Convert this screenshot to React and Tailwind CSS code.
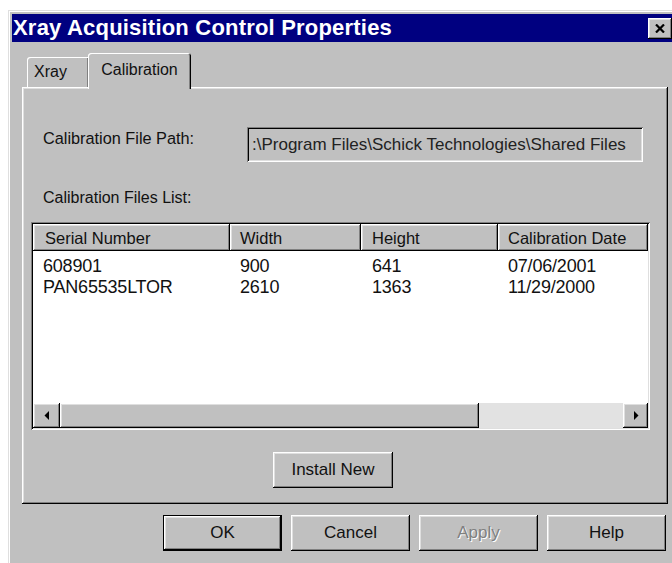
// Xray Acquisition Control Properties dialog, Calibration tab
const raised =
  "bg-[#c0c0c0] shadow-[inset_-1px_-1px_0_#000,inset_1px_1px_0_#fff,inset_-2px_-2px_0_#808080,inset_2px_2px_0_#dfdfdf]";
const sunken =
  "shadow-[inset_1px_1px_0_#808080,inset_-1px_-1px_0_#fff,inset_2px_2px_0_#000,inset_-2px_-2px_0_#dfdfdf]";

function Button({ children, className = "", disabled = false, isDefault = false }) {
  return (
    <div
      className={
        "flex items-center justify-center h-[36px] text-[17px] " +
        (isDefault ? "border border-black " : "") +
        className
      }
    >
      <div className={"w-full h-full flex items-center justify-center " + raised}>
        <span
          className={
            disabled ? "text-[#808080] [text-shadow:1px_1px_0_#fff]" : "text-[#111]"
          }
        >
          {children}
        </span>
      </div>
    </div>
  );
}

function ArrowLeft() {
  return (
    <svg width="6" height="9" viewBox="0 0 6 9">
      <path d="M5 0 L5 9 L0.5 4.5 Z" fill="#000" />
    </svg>
  );
}

function ArrowRight() {
  return (
    <svg width="6" height="9" viewBox="0 0 6 9">
      <path d="M1 0 L1 9 L5.5 4.5 Z" fill="#000" />
    </svg>
  );
}

const rows = [
  ["608901", "900", "641", "07/06/2001"],
  ["PAN65535LTOR", "2610", "1363", "11/29/2000"],
];

export default function App() {
  return (
    <div className="w-[672px] h-[563px] overflow-hidden bg-white font-['Liberation_Sans',Arial,sans-serif] text-[16px] leading-[18px] text-[#111]">
      {/* window frame */}
      <div className="ml-[8px] mt-[10px] w-[670px] h-[560px] bg-[#c0c0c0] shadow-[inset_1px_1px_0_#dfdfdf,inset_2px_2px_0_#fff] pt-[4px] pl-[4px] pr-[4px]">
        {/* caption */}
        <div className="h-[28px] bg-[#000080] flex items-center">
          <span className="pl-[1px] text-white font-bold text-[22px] leading-[28px] tracking-[0.2px]">
            Xray Acquisition Control Properties
          </span>
          <div className={"ml-auto mr-[2px] w-[24px] h-[21px] flex items-center justify-center " + raised}>
            <svg width="10" height="9" viewBox="0 0 10 9">
              <path d="M1 0.5 L9 8.5 M9 0.5 L1 8.5" stroke="#000" strokeWidth="2.2" />
            </svg>
          </div>
        </div>

        <div className="ml-[10px] w-[646px]">
          {/* tabs */}
          <div className="mt-[11px] h-[34px] pl-[5px] flex items-end">
            <div className="h-[30px] w-[61px] rounded-tl-[3px] shadow-[inset_1px_1px_0_#fff,inset_-1px_0_0_#808080] flex items-center pl-[7px]">
              <span>Xray</span>
            </div>
            <div className="relative z-10 -mb-[2px] h-[36px] w-[103px] bg-[#c0c0c0] rounded-t-[3px] shadow-[inset_1px_1px_0_#fff,inset_-1px_0_0_#000,inset_-2px_0_0_#808080] flex items-start justify-center pt-[8px]">
              <span>Calibration</span>
            </div>
          </div>

          {/* tab page */}
          <div className={"h-[417px] pt-[40px] pl-[9px] " + raised}>
            <div className="flex items-start">
              <div className="ml-[12px] w-[204px] mt-[2px] text-[16.3px]">Calibration File Path:</div>
              <div className={"w-[396px] h-[35px] flex items-center pl-[5px] pr-[4px] overflow-hidden whitespace-nowrap " + sunken}>
                <span className="text-[#222] text-[17px]">:\Program Files\Schick Technologies\Shared Files</span>
              </div>
            </div>

            <div className="ml-[12px] mt-[27px]">Calibration Files List:</div>

            {/* list view */}
            <div className={"mt-[15px] w-[619px] h-[208px] p-[2px] flex flex-col bg-white " + sunken}>
              <div className="h-[27px] flex shrink-0 text-[16.5px]">
                <div className={"w-[197px] pl-[12px] flex items-center " + raised}>Serial Number</div>
                <div className={"w-[131px] pl-[10px] flex items-center " + raised}>Width</div>
                <div className={"w-[137px] pl-[11px] flex items-center " + raised}>Height</div>
                <div className={"flex-1 pl-[10px] flex items-center overflow-hidden whitespace-nowrap " + raised}>Calibration Date</div>
              </div>
              <div className="flex-1 bg-white pt-[4px] text-[18px] tracking-[-0.2px]">
                {rows.map((r) => (
                  <div key={r[0]} className="h-[21px] flex items-center">
                    <div className="w-[197px] pl-[10px]">{r[0]}</div>
                    <div className="w-[131px] pl-[10px]">{r[1]}</div>
                    <div className="w-[137px] pl-[11px]">{r[2]}</div>
                    <div className="flex-1 pl-[10px]">{r[3]}</div>
                  </div>
                ))}
              </div>
              {/* horizontal scroll bar */}
              <div className="h-[25px] flex shrink-0">
                <div className={"w-[27px] flex items-center justify-center " + raised}>
                  <ArrowLeft />
                </div>
                <div className={"w-[419px] " + raised}></div>
                <div className="flex-1 bg-[#e2e2e2]"></div>
                <div className={"w-[25px] flex items-center justify-center " + raised}>
                  <ArrowRight />
                </div>
              </div>
            </div>

            <Button className="ml-[242px] mt-[22px] w-[120px]">Install New</Button>
          </div>

          {/* dialog buttons */}
          <div className="mt-[11px] flex gap-[9px] pl-[141px]">
            <Button className="w-[119px]" isDefault>OK</Button>
            <Button className="w-[119px]">Cancel</Button>
            <Button className="w-[119px]" disabled>Apply</Button>
            <Button className="w-[119px]">Help</Button>
          </div>
        </div>
      </div>
    </div>
  );
}
